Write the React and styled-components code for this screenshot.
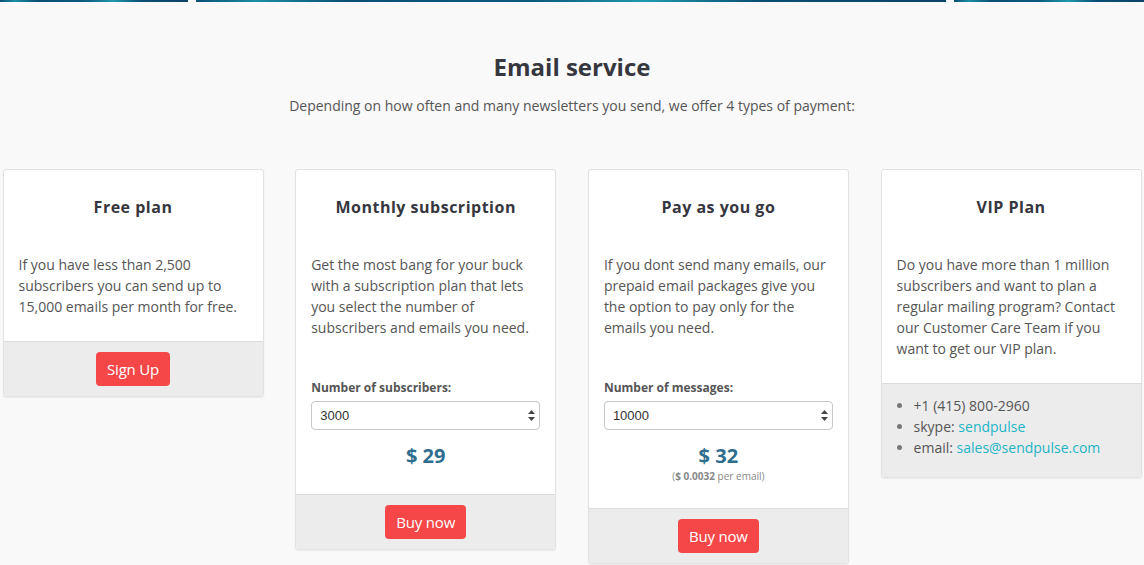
import React from "react";
import styled, { createGlobalStyle } from "styled-components";

const GlobalStyle = createGlobalStyle`
  body {
    margin: 0;
    background: #f9f9f9;
    font-family: "Open Sans", "Noto Sans", sans-serif;
    color: #555;
  }
`;

const Page = styled.div`
  width: 1144px;
  height: 565px;
  overflow: hidden;
`;

const Strip = styled.div`
  height: 2px;
  display: flex;
  gap: 8px;
`;

const StripPart = styled.div`
  flex: ${(p) => p.$grow};
  background: linear-gradient(
    90deg,
    #0b4f74 0%,
    #1a8fa6 8%,
    #0b4f74 20%,
    #0d5b80 45%,
    #1e9ab0 60%,
    #0b4f74 75%,
    #0a4468 100%
  );
`;

const Header = styled.header`
  text-align: center;
  padding-top: 50px;
`;

const Title = styled.h1`
  margin: 0;
  font-size: 24px;
  line-height: 29px;
  font-weight: 700;
  color: #36363f;
`;

const Subtitle = styled.p`
  margin: 15px 0 0;
  font-size: 14px;
  line-height: 20px;
  color: #555;
`;

const Cards = styled.div`
  display: grid;
  grid-template-columns: repeat(4, 261px);
  column-gap: 31.7px;
  align-items: start;
  padding-left: 2.5px;
  margin-top: 53px;
`;

const Card = styled.div`
  background: #fff;
  border: 1px solid #e2e2e2;
  border-radius: 3px;
  box-shadow: 0 1px 2px rgba(0, 0, 0, 0.06);
  overflow: hidden;
`;

const Body = styled.div`
  padding: 25px 15px 24px;
`;

const CardTitle = styled.h3`
  margin: 0 0 35px;
  text-align: center;
  font-size: 16px;
  line-height: 24px;
  font-weight: 700;
  color: #36363f;
  letter-spacing: 0.5px;
`;

const Text = styled.p`
  margin: 0;
  font-size: 14px;
  line-height: 21px;
  color: #555;
`;

const Label = styled.label`
  display: block;
  margin-top: 41px;
  font-size: 12px;
  line-height: 17px;
  font-weight: 700;
  color: #555;
`;

const SelectWrap = styled.div`
  position: relative;
  margin-top: 5px;
`;

const Select = styled.select`
  appearance: none;
  width: 100%;
  height: 29px;
  padding: 0 8px;
  border: 1px solid #c8c8c8;
  border-radius: 4px;
  background: #fff;
  font-family: "Liberation Sans", Arial, sans-serif;
  font-size: 13px;
  color: #333;
  outline: none;
`;

const Arrows = styled.svg`
  position: absolute;
  right: 5px;
  top: 9px;
  pointer-events: none;
`;

const Price = styled.div`
  margin-top: 12px;
  text-align: center;
  font-size: 20px;
  line-height: 28px;
  font-weight: 700;
  color: #2f6d8f;
`;

const PerEmail = styled.div`
  text-align: center;
  font-size: 10px;
  line-height: 12px;
  color: #888;
  margin-bottom: 2px;

  b {
    font-weight: 700;
  }
`;

const Footer = styled.div`
  background: #ececec;
  border-top: 1px solid #dcdcdc;
  padding: 10px 15px;
  display: flex;
  justify-content: center;
`;

const Button = styled.button`
  height: 34px;
  padding: 0 11px;
  border: none;
  border-radius: 4px;
  background: #f54748;
  color: #fff;
  font-family: "Open Sans", sans-serif;
  font-size: 15px;
  letter-spacing: -0.2px;
  cursor: pointer;
`;

const Contacts = styled.ul`
  margin: 0;
  padding: 11px 15px 19px 32px;
  background: #ececec;
  border-top: 1px solid #dcdcdc;
  font-size: 14px;
  line-height: 21px;
  color: #555;

  li::marker {
    color: #777;
  }
`;

const Link = styled.a`
  color: #22b4c6;
  text-decoration: none;
`;

const SelectField = ({ label, value }) => (
  <>
    <Label>{label}</Label>
    <SelectWrap>
      <Select defaultValue={value}>
        <option>{value}</option>
      </Select>
      <Arrows width="7" height="11" viewBox="0 0 7 11">
        <path d="M3.5 0 L7 4 H0 Z M0 7 H7 L3.5 11 Z" fill="#444" />
      </Arrows>
    </SelectWrap>
  </>
);

export default function App() {
  return (
    <Page>
      <GlobalStyle />
      <Strip>
        <StripPart $grow={188} />
        <StripPart $grow={750} />
        <StripPart $grow={190} />
      </Strip>
      <Header>
        <Title>Email service</Title>
        <Subtitle>
          Depending on how often and many newsletters you send, we offer 4 types of payment:
        </Subtitle>
      </Header>
      <Cards>
        <Card>
          <Body>
            <CardTitle>Free plan</CardTitle>
            <Text>
              If you have less than 2,500 subscribers you can send up to 15,000 emails per month for free.
            </Text>
          </Body>
          <Footer>
            <Button>Sign Up</Button>
          </Footer>
        </Card>

        <Card>
          <Body>
            <CardTitle>Monthly subscription</CardTitle>
            <Text>
              Get the most bang for your buck with a subscription plan that lets you select the number of
              subscribers and emails you need.
            </Text>
            <SelectField label="Number of subscribers:" value="3000" />
            <Price>$ 29</Price>
          </Body>
          <Footer>
            <Button>Buy now</Button>
          </Footer>
        </Card>

        <Card>
          <Body>
            <CardTitle>Pay as you go</CardTitle>
            <Text>
              If you dont send many emails, our prepaid email packages give you the option to pay only for
              the emails you need.
            </Text>
            <SelectField label="Number of messages:" value="10000" />
            <Price>$ 32</Price>
            <PerEmail>
              (<b>$ 0.0032</b> per email)
            </PerEmail>
          </Body>
          <Footer>
            <Button>Buy now</Button>
          </Footer>
        </Card>

        <Card>
          <Body>
            <CardTitle>VIP Plan</CardTitle>
            <Text>
              Do you have more than 1 million subscribers and want to plan a regular mailing program? Contact
              our Customer Care Team if you want to get our VIP plan.
            </Text>
          </Body>
          <Contacts>
            <li>+1 (415) 800-2960</li>
            <li>
              skype: <Link href="#">sendpulse</Link>
            </li>
            <li>
              email: <Link href="#">sales@sendpulse.com</Link>
            </li>
          </Contacts>
        </Card>
      </Cards>
    </Page>
  );
}
